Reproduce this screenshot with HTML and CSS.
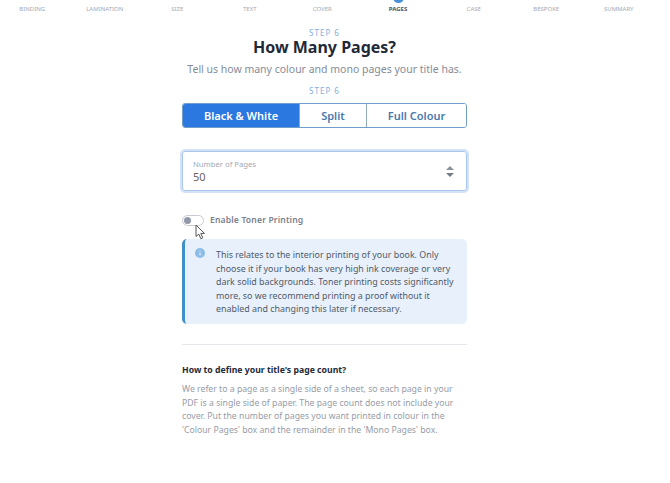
FILE: index.html
```html
<!DOCTYPE html>
<html lang="en">
<head>
<meta charset="utf-8">
<title>How Many Pages?</title>
<link rel="stylesheet" href="styles.css">
</head>
<body>
<nav class="steps">
  <span class="step">BINDING</span>
  <span class="step">LAMINATION</span>
  <span class="step">SIZE</span>
  <span class="step">TEXT</span>
  <span class="step">COVER</span>
  <span class="step step-active"><i class="dot"></i>PAGES</span>
  <span class="step">CASE</span>
  <span class="step">BESPOKE</span>
  <span class="step">SUMMARY</span>
</nav>
<main class="panel">
  <p class="eyebrow">STEP 6</p>
  <h1 class="title">How Many Pages?</h1>
  <p class="lead">Tell us how many colour and mono pages your title has.</p>
  <p class="eyebrow eyebrow-second">STEP 6</p>
  <div class="tabs">
    <button class="tab tab-bw tab-on">Black &amp; White</button>
    <button class="tab tab-split">Split</button>
    <button class="tab tab-full">Full Colour</button>
  </div>
  <div class="field">
    <div class="field-text">
      <span class="field-label">Number of Pages</span>
      <span class="field-value">50</span>
    </div>
    <div class="spin"><i class="up"></i><i class="down"></i></div>
  </div>
  <div class="toggle-row">
    <span class="toggle"><i class="knob"></i></span>
    <span class="toggle-label">Enable Toner Printing</span>
    <svg class="cursor" width="11" height="16" viewBox="0 0 11 16"><path d="M1 1v11.5l2.8-2.4 2 4.6 2-.9-2-4.4h3.7z" fill="#fff" stroke="#555" stroke-width="1"/></svg>
  </div>
  <div class="note">
    <svg class="note-icon" width="10" height="10" viewBox="0 0 10 10"><circle cx="5" cy="5" r="5" fill="#8dbce8"/><rect x="4.5" y="4.3" width="1" height="3.4" fill="#e3eefa"/><rect x="4.5" y="2.4" width="1" height="1" fill="#e3eefa"/></svg>
    <p class="note-text">This relates to the interior printing of your book. Only choose it if your book has very high ink coverage or very dark solid backgrounds. Toner printing costs significantly more, so we recommend printing a proof without it enabled and changing this later if necessary.</p>
  </div>
  <hr class="rule">
  <h2 class="sub">How to define your title's page count?</h2>
  <p class="body-text">We refer to a page as a single side of a sheet, so each page in your PDF is a single side of paper. The page count does not include your cover. Put the number of pages you want printed in colour in the 'Colour Pages' box and the remainder in the 'Mono Pages' box.</p>
</main>
</body>
</html>
```
FILE: styles.css
```css
* { box-sizing: border-box; }
html, body { margin: 0; padding: 0; }
body {
  width: 670px;
  height: 483px;
  overflow: hidden;
  background: #fff;
  font-family: "Noto Sans", "Open Sans", sans-serif;
  color: #1f2937;
}
.steps {
  display: grid;
  grid-template-columns: repeat(5, 72.5px) 79px repeat(3, 72.5px);
  margin-left: -4px;
  height: 14px;
}
.step {
  position: relative;
  text-align: center;
  font-size: 6px;
  line-height: 8px;
  padding-top: 5px;
  color: #a3a9b4;
}
.step-active { color: #4b5563; font-weight: 700; }
.dot {
  position: absolute;
  left: 50%;
  top: -8px;
  width: 11px;
  height: 11px;
  margin-left: -5.5px;
  border-radius: 50%;
  background: #4a90d9;
}
.panel {
  width: 285px;
  margin: 13px 0 0 182px;
}
.eyebrow {
  margin: 0;
  text-align: center;
  font-size: 8px;
  line-height: 11px;
  letter-spacing: 1px;
  color: #7fb0dc;
}
.eyebrow-second { margin-top: 7px; }
.title {
  margin: 0 -40px;
  text-align: center;
  font-size: 16px;
  line-height: 18px;
  font-weight: 700;
  color: #1f2937;
}
.lead {
  margin: 4px -40px 0;
  text-align: center;
  font-size: 10.5px;
  line-height: 18px;
  color: #858c99;
}
.tabs {
  display: flex;
  margin-top: 7px;
  height: 25px;
  border: 1px solid #6f9fc9;
  border-radius: 3px;
  overflow: hidden;
}
.tab {
  border: 0;
  background: #fff;
  padding: 0;
  font: 600 11px "Noto Sans", sans-serif;
  color: #4a78ae;
  border-left: 1px solid #8fa9bf;
}
.tab-bw { width: 116px; border-left: 0; }
.tab-split { width: 67px; }
.tab-full { flex: 1; }
.tab-on { background: #2a78e0; color: #fff; }
.field {
  display: flex;
  align-items: center;
  justify-content: space-between;
  margin-top: 23px;
  height: 40px;
  padding: 0 12px 0 10px;
  border: 1px solid #a9c6ec;
  border-radius: 3px;
  box-shadow: 0 0 0 2px #d3e2f6;
}
.field-text { display: flex; flex-direction: column; }
.field-label { font-size: 7.7px; line-height: 10px; color: #a3a9b4; }
.field-value { font-size: 11px; line-height: 15px; color: #6b645e; }
.spin { display: flex; flex-direction: column; gap: 3px; }
.up, .down { display: block; width: 0; height: 0; border-left: 4px solid transparent; border-right: 4px solid transparent; }
.up { border-bottom: 4px solid #8a929e; }
.down { border-top: 4px solid #737b88; }
.toggle-row {
  position: relative;
  display: flex;
  align-items: center;
  gap: 6px;
  margin-top: 22px;
  height: 14px;
}
.toggle {
  display: block;
  width: 22px;
  height: 11px;
  padding: 1px;
  border: 1px solid #c5cad3;
  border-radius: 6px;
  background: #fff;
}
.knob { display: block; width: 7px; height: 7px; border-radius: 50%; background: #9298aa; }
.toggle-label { font-size: 8.6px; font-weight: 600; letter-spacing: .15px; color: #7b818c; }
.cursor { position: absolute; left: 13px; top: 11px; }
.note {
  display: flex;
  gap: 11px;
  margin-top: 12px;
  height: 85px;
  padding: 9px 11px 0 10px;
  border-left: 3px solid #3f8fc8;
  border-radius: 5px;
  background: #e8f1fb;
}
.note-icon { flex: none; }
.note-text { margin: 0; font-size: 8.9px; line-height: 13.6px; color: #505a69; }
.rule { margin: 20px 0 0; border: 0; border-top: 1px solid #e5e7eb; }
.sub {
  margin: 19px 0 0;
  font-size: 8.7px;
  line-height: 13px;
  font-weight: 700;
  color: #1f2937;
}
.body-text { margin: 6px 0 0; font-size: 8.7px; line-height: 13.6px; color: #969ca8; }
```
